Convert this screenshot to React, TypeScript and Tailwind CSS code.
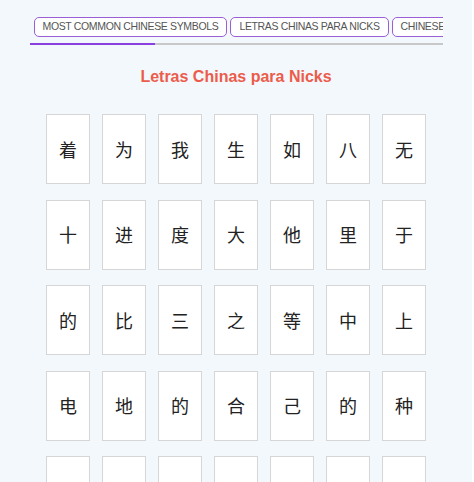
const TABS = ["Most Common Chinese Symbols", "Letras Chinas para Nicks", "Chinese Symbols for Love"];

const ROWS = [
  ["着", "为", "我", "生", "如", "八", "无"],
  ["十", "进", "度", "大", "他", "里", "于"],
  ["的", "比", "三", "之", "等", "中", "上"],
  ["电", "地", "的", "合", "己", "的", "种"],
  ["", "", "", "", "", "", ""],
];

export default function App() {
  return (
    <div className="flex h-[482px] w-[474px] overflow-hidden bg-white font-['Liberation_Sans','Noto_Sans_CJK_SC',sans-serif]">
      <div className="flex w-[472px] flex-col items-center bg-[#f3f8fd]">
        <div className="mt-[17px] w-[413px]">
          <div className="flex gap-[3px] overflow-hidden pl-1">
            {TABS.map((t) => (
              <button
                key={t}
                type="button"
                className="flex h-5 shrink-0 items-center rounded-[5px] border border-[#9a5fd4] bg-white px-[8px] text-[10.5px] tracking-[-0.35px] uppercase text-[#555]"
              >
                {t}
              </button>
            ))}
          </div>
          <div className="mt-[6px] flex h-[2px]">
            <div className="w-[125px] bg-[#8b3fe0]" />
            <div className="flex-1 bg-[#c8c8c8]" />
          </div>
        </div>

        <h2 className="mt-[20px] text-[16px] font-bold text-[#ec5c4b]">Letras Chinas para Nicks</h2>

        <div className="mt-[25px] flex flex-col gap-[15.5px]">
          {ROWS.map((row, r) => (
            <div key={r} className="flex gap-[12px]">
              {row.map((c, i) => (
                <div
                  key={i}
                  className="flex h-[70px] w-[44px] items-center justify-center border border-[#d6d6d6] bg-white font-['Noto_Sans_CJK_SC',sans-serif] text-[18px] text-[#222]"
                >
                  {c}
                </div>
              ))}
            </div>
          ))}
        </div>
      </div>
    </div>
  );
}
